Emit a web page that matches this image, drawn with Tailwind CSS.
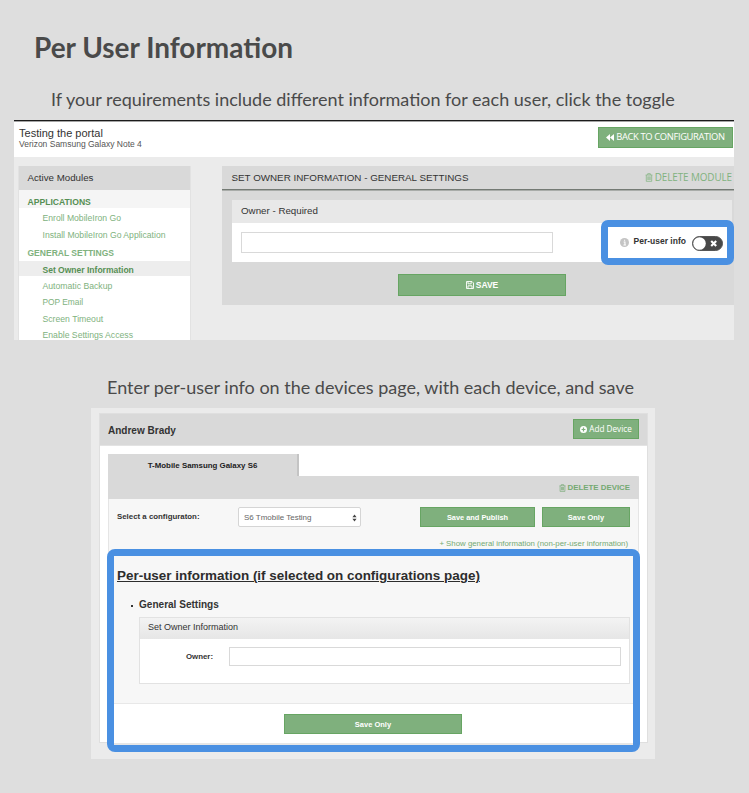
<!DOCTYPE html>
<html lang="en">
<head>
<meta charset="utf-8">
<title>Per User Information</title>
<script src="https://cdn.jsdelivr.net/npm/@tailwindcss/browser@4"></script>
</head>
<body class="w-[749px] h-[793px] overflow-hidden bg-[#dedede] font-['Liberation_Sans',Arial,sans-serif] text-[#333] whitespace-nowrap">
<svg class="hidden">
  <symbol id="trash" viewBox="0 0 14 16"><path d="M1 3.6h12M4.7 3.4V1.2h4.6v2.2M2.2 3.8v11h9.6v-11M5 6v6.5M7 6v6.5M9 6v6.5" fill="none" stroke="currentColor" stroke-width="1.3"/></symbol>
</svg>
<main class="flex flex-col">
  <h1 class="h-[89px] pt-[30px] pl-[34px] font-['Lato',sans-serif] font-bold text-[27.95px] leading-[34px] text-[#4a4a4a]">Per User Information</h1>
  <p class="h-[31px] pl-[51px] font-['Lato',sans-serif] text-[18px] leading-[20px] text-[#4a4a4a]">If your requirements include different information for each user, click the toggle</p>

  <section class="relative ml-[14px] w-[720px] h-[220px] overflow-hidden bg-[#ebebeb] flex flex-col">
    <header class="h-[37px] shrink-0 bg-white border-t border-[#1b1b1b] shadow-[inset_0_1px_0_#a5a5a5] pl-[5px] pr-[1px] flex justify-between">
      <div class="pt-[6px]">
        <div class="text-[11.03px] leading-[12px] text-[#333]">Testing the portal</div>
        <div class="text-[8.5px] leading-[11px] text-[#555]">Verizon Samsung Galaxy Note 4</div>
      </div>
      <button class="mt-[6px] w-[135px] h-[21px] bg-[#7fb07d] border border-[#67a563] text-white flex items-center justify-center gap-[2px] font-['Open_Sans',sans-serif] text-[9.4px] tracking-[-0.37px]">
        <svg class="w-[8px] h-[7px]" viewBox="0 0 8 7" fill="currentColor"><path d="M4 0v7L0 3.5zM8 0v7L4 3.5z"/></svg>BACK TO CONFIGURATION</button>
    </header>
    <div class="flex pt-[9px] pl-[4px] gap-[31px]">
      <aside class="w-[173px] h-[180px] shrink-0 bg-white border-x border-[#e2e2e2] text-[#80b27e]">
        <div class="h-[24px] pl-[8.5px] bg-[#d9d9d9] text-[#333] text-[9.73px] leading-[23px]">Active Modules</div>
        <div class="h-[18px] pl-[8.5px] bg-[#f5f5f5] font-bold text-[8.6px] leading-[25px] text-[#568f54]">APPLICATIONS</div>
        <ul class="pl-[23.5px] pt-[2px] text-[8.62px] leading-[16.5px]">
          <li>Enroll MobileIron Go</li>
          <li>Install MobileIron Go Application</li>
        </ul>
        <div class="h-[18px] pl-[8.5px] font-bold text-[8.52px] leading-[21px]">GENERAL SETTINGS</div>
        <div class="h-[15px] pl-[23.5px] bg-[#ededed] font-bold text-[8.52px] leading-[18px] text-[#568f54]">Set Owner Information</div>
        <ul class="pl-[23.5px] pt-[2px] text-[8.66px] leading-[16.4px]">
          <li>Automatic Backup</li>
          <li class="text-[8.35px]">POP Email</li>
          <li>Screen Timeout</li>
          <li>Enable Settings Access</li>
        </ul>
      </aside>
      <div class="w-[512px] h-[139px] bg-[#d9d9d9] flex flex-col">
        <div class="h-[24px] pl-[9.5px] pr-[2px] border-b border-[#747a74] shadow-[0_1px_0_#a9aca9] flex justify-between text-[9.82px] leading-[23px]">
          <span>SET OWNER INFORMATION - GENERAL SETTINGS</span>
          <span class="flex items-center gap-[2px] font-['Open_Sans',sans-serif] text-[9.9px] tracking-[-0.08px] leading-[25px] text-[#80b27e]"><svg class="w-[8px] h-[9px]"><use href="#trash"/></svg>DELETE MODULE</span>
        </div>
        <div class="mt-[10px] ml-[10px] w-[500px] h-[62px] bg-white">
          <div class="h-[23px] pl-[9px] bg-[#e8e8e8] text-[9.76px] leading-[22px]">Owner - Required</div>
          <div class="mt-[9px] ml-[9px] w-[312px] h-[21px] border border-[#d9d9d9] bg-white"></div>
        </div>
        <button class="mt-[12px] ml-[176px] w-[168px] h-[22px] bg-[#7fb07d] border border-[#67a563] text-white flex items-center justify-center gap-[2px] font-bold text-[8.5px]">
          <svg class="w-[8px] h-[8px]" viewBox="0 0 8 8" fill="none" stroke="currentColor" stroke-width=".9"><path d="M.5.5h5.5l1.5 1.5v5.5h-7zM2 .5v2.3h3.2V.5M2 7.5V4.8h4v2.7"/></svg>SAVE</button>
      </div>
    </div>
    <div class="absolute left-[587px] top-[100px] w-[133px] h-[45px] rounded-[7px] border-[7px] border-[#4a90e2] bg-[#4a90e2]">
      <div class="h-full bg-white flex items-center pl-[11.5px] text-[#333]">
        <svg class="w-[9px] h-[9px]" viewBox="0 0 10 10"><circle cx="5" cy="5" r="5" fill="#c4c4c4"/><path d="M4 4.4h1.5v3.3M3.8 7.8h2.8M4.5 2.5h1.2" stroke="#fff" stroke-width="1.2" fill="none"/></svg>
        <span class="ml-[5px] -mt-[2px] w-[53px] font-bold text-[8.5px]">Per-user info</span>
        <svg class="ml-[5.5px] mt-[1px] w-[31px] h-[15px]" viewBox="0 0 31 15"><rect x=".5" y=".5" width="30" height="14" rx="7" fill="#484848" stroke="#555"/><circle cx="7.5" cy="7.5" r="6.3" fill="#fff"/><path d="M19.2 5l5 5M24.2 5l-5 5" stroke="#fff" stroke-width="2.1"/></svg>
      </div>
    </div>
  </section>

  <p class="h-[68px] pt-[37px] pl-[107px] font-['Lato',sans-serif] text-[18px] leading-[20px] text-[#4a4a4a]">Enter per-user info on the devices page, with each device, and save</p>

  <section class="relative ml-[91px] w-[564px] h-[351px] bg-[#ebebeb] pt-[5px] pl-[8px]">
    <div class="w-[549px] h-[330px] bg-white border border-[#dfdfdf] flex flex-col">
      <header class="h-[32px] shrink-0 bg-[#d9d9d9] border-b border-[#e3e3e3] pl-[8px] pr-[8px] flex justify-between">
        <span class="font-bold text-[10.03px] leading-[33px]">Andrew Brady</span>
        <button class="mt-[5px] w-[66px] h-[20px] bg-[#7fb07d] border border-[#67a563] text-white flex items-center justify-center gap-[2px] font-['Open_Sans',sans-serif] text-[8.2px]">
          <svg class="w-[7px] h-[7px]" viewBox="0 0 8 8"><circle cx="4" cy="4" r="4" fill="#fff"/><path d="M4 1.8v4.4M1.8 4h4.4" stroke="#7fb07d" stroke-width="1.4"/></svg>Add Device</button>
      </header>
      <div class="ml-[8px] mt-[8px] w-[191px] h-[22px] shrink-0 bg-[#d9d9d9] border-r-2 border-[#c4c4c4] text-center font-bold text-[7.9px] leading-[23px] text-[#222]">T-Mobile Samsung Galaxy S6</div>
      <div class="ml-[8px] w-[531px] h-[227px] bg-[#f7f7f7] border-x border-b border-[#e5e5e5] flex flex-col">
        <div class="-mx-px h-[23px] shrink-0 rounded-tr-[2px] bg-[#d9d9d9] pr-[9px] flex items-center justify-end gap-[2px] font-bold text-[7.87px] text-[#74a972]"><svg class="w-[7px] h-[8px]"><use href="#trash"/></svg>DELETE DEVICE</div>
        <div class="mt-[8px] pl-[8px] pr-[8px] h-[20px] flex">
          <span class="w-[121px] font-bold text-[7.87px] leading-[19px]">Select a configuraton:</span>
          <div class="w-[123px] h-[20px] rounded-[2px] border border-[#d5d5d5] bg-white flex justify-between items-center pl-[5px] pr-[3px] text-[7.98px] leading-[10px] pt-[1px] text-[#666]">S6 Tmobile Testing<svg class="w-[5px] h-[8px]" viewBox="0 0 5 8" fill="#444"><path d="M.4 3.3L2.5.5l2.1 2.8zM.4 4.7h4.2L2.5 7.5z"/></svg></div>
          <button class="ml-[59px] pt-[2px] w-[115px] h-[20px] bg-[#7fb07d] border border-[#67a563] text-white font-bold text-[7.4px] leading-[10px]">Save and Publish</button>
          <button class="ml-[7px] pt-[2px] w-[88px] h-[20px] bg-[#7fb07d] border border-[#67a563] text-white font-bold text-[7.5px] leading-[10px]">Save Only</button>
        </div>
        <div class="pt-[11px] pr-[10px] text-right text-[7.84px] leading-[11px] text-[#74a972]">+ Show general information (non-per-user information)</div>
      </div>
    </div>
    <div class="absolute left-[16px] top-[141px] w-[533px] h-[203px] rounded-[8px] border-[7px] border-[#4a90e2] bg-[#4a90e2]">
      <div class="h-[189px] bg-white border-b-2 border-[#e6e6e6] flex flex-col">
        <div class="h-[148px] bg-[#f7f7f7] border-b border-[#e8e8e8] pl-[3px]">
          <h2 class="pt-[12px] text-[13.44px] leading-[16px] font-bold underline underline-offset-[1px] decoration-1 text-[#2d2d2d]">Per-user information (if selected on configurations page)</h2>
          <div class="mt-[15px] ml-[14px] flex items-center gap-[6px] h-[12px] font-bold text-[10.05px] leading-[12px]"><i class="block w-[2px] h-[2px] mt-[2px] bg-[#333]"></i>General Settings</div>
          <div class="mt-[6px] ml-[22px] w-[491px] h-[67px] bg-white border border-[#e2e2e2]">
            <div class="h-[21px] pl-[8px] bg-linear-to-b from-[#f3f3f3] to-[#e6e6e6] text-[9px] leading-[19px]">Set Owner Information</div>
            <div class="mt-[8px] flex">
              <span class="w-[89px] pl-[46px] font-bold text-[7.85px] leading-[19px]">Owner:</span>
              <div class="w-[392px] h-[19px] border border-[#d9d9d9] bg-white"></div>
            </div>
          </div>
        </div>
        <button class="mt-[10px] ml-[170px] pt-[2px] w-[178px] h-[20px] bg-[#7fb07d] border border-[#67a563] text-white font-bold text-[7.5px] leading-[10px]">Save Only</button>
      </div>
    </div>
  </section>
</main>
</body>
</html>
